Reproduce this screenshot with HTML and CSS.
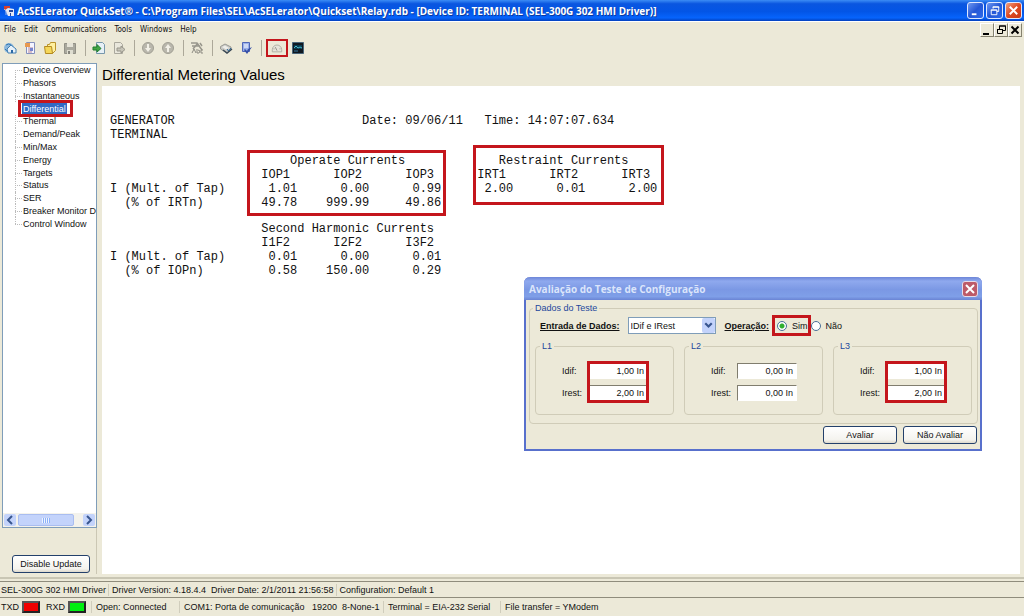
FILE: index.html
```html
<!DOCTYPE html>
<html lang="en">
<head>
<meta charset="utf-8">
<title>AcSELerator QuickSet</title>
<link rel="stylesheet" href="styles.css">
</head>
<body>
<div class="window">
  <header class="titlebar">
    <svg class="app-icon" viewBox="0 0 12 12" aria-hidden="true"><path d="M1 1h6v2H4v2H1z" fill="#d8412f"/><path d="M2 5l3-2 6 1v7H5z" fill="#e4e8f4"/><path d="M6 5h4v2H6zM7 8h1v3H7z" fill="#27489c"/><path d="M1 4l2 2v4" stroke="#9db4e8" fill="none"/></svg>
    <h1 class="title">AcSELerator QuickSet® - C:\Program Files\SEL\AcSELerator\Quickset\Relay.rdb - [Device ID: TERMINAL (SEL-300G 302 HMI Driver)]</h1>
    <div class="window-buttons">
      <button class="wbtn" aria-label="Minimize"><svg viewBox="0 0 16 16"><path d="M4 11h5v2H4z" fill="#fff"/></svg></button>
      <button class="wbtn" aria-label="Restore"><svg viewBox="0 0 16 16"><path d="M6.500 6V4h6v5h-2M6 4.500h7M4.500 7.500h6v5h-6zM4 7.500h7" fill="none" stroke="#fff"/></svg></button>
      <button class="wbtn wbtn-close" aria-label="Close"><svg viewBox="0 0 16 16"><path d="M4 4l8 8M12 4l-8 8" fill="none" stroke="#fff" stroke-width="2"/></svg></button>
    </div>
  </header>

  <nav class="menubar">
    <button>File</button><button>Edit</button><button>Communications</button><button>Tools</button><button>Windows</button><button>Help</button>
    <div class="mdi-buttons">
      <button aria-label="Minimize document"><svg viewBox="0 0 12 12"><path d="M2 9h6v2H2z"/></svg></button>
      <button aria-label="Restore document"><svg viewBox="0 0 12 12"><path d="M4.500 5V2h6v4.500H8M4 2h7M2.500 5.500h5v4h-5zM2 5.500h6" fill="none" stroke="#000"/></svg></button>
      <button aria-label="Close document"><svg viewBox="0 0 12 12"><path d="M2.500 2.500l7 7M9.500 2.500l-7 7" fill="none" stroke="#000" stroke-width="2"/></svg></button>
    </div>
  </nav>

  <div class="toolbar">
    <button aria-label="Home"><svg viewBox="0 0 14 14"><circle cx="6" cy="7" r="5" fill="#8db8dc"/><path d="M3 4q3-2 5 0M2 8q2 2 3 3" stroke="#3478b4" fill="none"/><path d="M4 8l4-4 5 4v4H5z" fill="#e8f1f8" stroke="#417fb3"/><path d="M8 9h2v3H8z" fill="#2968a5"/></svg></button>
    <button aria-label="New"><svg viewBox="0 0 14 14"><path d="M3.500 1.500h8v11h-8z" fill="#f4f4ff" stroke="#8490bd"/><path d="M2 2h5v4H2z" fill="#e89950"/><path d="M5 7h5M5 9h5M5 11h4" stroke="#b88794"/><path d="M7 7h3v3H7z" fill="#7684cf"/></svg></button>
    <button aria-label="Open"><svg viewBox="0 0 14 14"><path d="M4.500 3.500h2l1-2h5v8l-3 3h-5z" fill="#fff0a0" stroke="#bb942b"/><path d="M1.500 5.500h7l1 7h-7z" fill="#f5d75a" stroke="#b58a20"/></svg></button>
    <button aria-label="Save" disabled><svg viewBox="0 0 14 14"><path d="M1.500 2.500h11v10h-11z" fill="#aaa99e" stroke="#929187"/><path d="M4 2h6v4H4z" fill="#e6e4d8"/><path d="M4 9h6v4H4z" fill="#deddd0"/><path d="M5 10h2v3H5z" fill="#85847b"/></svg></button>
    <span class="sep"></span>
    <button aria-label="Read"><svg viewBox="0 0 14 14"><path d="M4.500 1.500h6l2 2v9h-8z" fill="#e7f0f6" stroke="#7797ac"/><path d="M1 6h4V3.500L9 7.500 5 11V9H1z" fill="#43a644" stroke="#207d2d"/></svg></button>
    <button aria-label="Send" disabled><svg viewBox="0 0 14 14"><path d="M2.500 1.500h6l2 2v9h-8z" fill="#e9e7dc" stroke="#aaa89d"/><path d="M5 7h4V5l4 3.500L9 12v-2H5z" fill="#c6c4b8" stroke="#98968b"/></svg></button>
    <span class="sep"></span>
    <button aria-label="Download" disabled><svg viewBox="0 0 14 14"><circle cx="7" cy="7" r="5.500" fill="#b9b7ac" stroke="#a19f94"/><path d="M6 3h2v4h2l-3 4-3-4h2z" fill="#f2f0e7"/></svg></button>
    <button aria-label="Upload" disabled><svg viewBox="0 0 14 14"><circle cx="7" cy="7" r="5.500" fill="#b9b7ac" stroke="#a19f94"/><path d="M6 11h2V7h2L7 3 4 7h2z" fill="#f2f0e7"/></svg></button>
    <span class="sep"></span>
    <button aria-label="Rename" disabled><svg viewBox="0 0 14 14"><path d="M1 2h6l5 7M8 2L3 8M10 2l2 3M2 5h8" stroke="#98968c" stroke-width="1.500" fill="none"/><path d="M2 12l2-4 2 4M7 8v4h2l1-2-2-1M13 9h-2v3h2" stroke="#8d8b82" fill="none"/></svg></button>
    <span class="sep"></span>
    <button aria-label="Terminal"><svg viewBox="0 0 14 14"><path d="M1.500 5.500L6 3l6 3v3l-4 3-6.500-4z" fill="#c9c9c4" stroke="#9a9a94"/><path d="M3 6l3-1.500L10 7 7 8.500z" fill="#eeeeea"/><path d="M4 9l4 3 5-4" stroke="#3c4a56" stroke-width="1.500" fill="none"/><path d="M8 8l1.500 2L12 7" stroke="#2a6696" fill="none"/></svg></button>
    <button aria-label="Check"><svg viewBox="0 0 14 14"><path d="M3.500 1.500h7v9h-7z" fill="#9bb1ea" stroke="#5167b7"/><path d="M5 4h4M5 6h4" stroke="#fff"/><path d="M5 9l3 4 5-7-4 2-1 2-2-2z" fill="#354fa8"/></svg></button>
    <span class="sep"></span>
    <button class="gauge" aria-label="Metering"><svg viewBox="0 0 14 14"><path d="M1.500 11.500V9a5.500 5.500 0 0 1 11 0v2.500z" fill="#e6e4da" stroke="#aaa89e"/><path d="M7 10L5 6M3 8h1M10 8h1" stroke="#88867d" fill="none"/></svg></button>
    <button aria-label="HMI"><svg viewBox="0 0 14 14"><path d="M1.500 1.500h11v11h-11z" fill="#101820" stroke="#48657a"/><path d="M3 4h8v4H3z" fill="#083b50"/><path d="M3 7l2-2 2 2 2-1 2 1" stroke="#48b6c8" fill="none"/><path d="M3 10h4" stroke="#3678a1"/></svg></button>
  </div>

  <main class="workspace">
    <aside class="sidebar">
      <div class="tree-panel">
        <ul class="tree">
          <li><a href="#">Device Overview</a></li>
          <li><a href="#">Phasors</a></li>
          <li><a href="#">Instantaneous</a></li>
          <li class="selected"><a href="#">Differential</a></li>
          <li><a href="#">Thermal</a></li>
          <li><a href="#">Demand/Peak</a></li>
          <li><a href="#">Min/Max</a></li>
          <li><a href="#">Energy</a></li>
          <li><a href="#">Targets</a></li>
          <li><a href="#">Status</a></li>
          <li><a href="#">SER</a></li>
          <li><a href="#">Breaker Monitor Da</a></li>
          <li><a href="#">Control Window</a></li>
        </ul>
        <div class="scrollbar">
          <button aria-label="Scroll left"><svg viewBox="0 0 12 12"><path d="M8 2L4 6l4 4" fill="none" stroke="#38568f" stroke-width="2"/></svg></button>
          <span class="track"><span class="thumb"></span></span>
          <button aria-label="Scroll right"><svg viewBox="0 0 12 12"><path d="M4 2l4 4-4 4" fill="none" stroke="#38568f" stroke-width="2"/></svg></button>
        </div>
      </div>
      <div class="update-panel"><button class="xp-button">Disable Update</button></div>
    </aside>

    <section class="content">
      <h2>Differential Metering Values</h2>
      <div class="report">
<pre>GENERATOR                          Date: 09/06/11   Time: 14:07:07.634
TERMINAL</pre>
<pre>                         Operate Currents             Restraint Currents
                     IOP1      IOP2      IOP3      IRT1      IRT2      IRT3
I (Mult. of Tap)      1.01      0.00      0.99      2.00      0.01      2.00
  (% of IRTn)        49.78    999.99     49.86</pre>
<pre>                     Second Harmonic Currents
                     I1F2      I2F2      I3F2
I (Mult. of Tap)      0.01      0.00      0.01
  (% of IOPn)         0.58    150.00      0.29</pre>
        <span class="mark mark-operate"></span>
        <span class="mark mark-restraint"></span>
      </div>
    </section>
  </main>

  <footer class="status">
    <div class="status-row driver-row">
      <span>SEL-300G 302 HMI Driver</span>
      <span>Driver Version: 4.18.4.4&nbsp; Driver Date: 2/1/2011 21:56:58</span>
      <span>Configuration: Default 1</span>
    </div>
    <div class="status-row comm-row">
      <span class="leds">TXD <i class="led led-tx"></i> <b class="rx">RXD</b> <i class="led led-rx"></i></span>
      <span class="open">Open: Connected</span>
      <span class="port">COM1: Porta de comunicação&nbsp;&nbsp; 19200&nbsp; 8-None-1</span>
      <span class="term">Terminal = EIA-232 Serial</span>
      <span>File transfer = YModem</span>
    </div>
  </footer>

  <form class="dialog" role="dialog" aria-labelledby="dialog-title">
    <div class="dialog-title">
      <h2 id="dialog-title">Avaliação do Teste de Configuração</h2>
      <button type="button" class="dialog-close" aria-label="Close"><svg viewBox="0 0 14 14"><path d="M3 3l8 8M11 3l-8 8" fill="none" stroke="#fff" stroke-width="2"/></svg></button>
    </div>
    <div class="dialog-body">
      <fieldset class="outer">
        <legend>Dados do Teste</legend>
        <div class="options">
          <label class="strong" for="entrada">Entrada de Dados:</label>
          <span class="select"><select id="entrada"><option>IDif e IRest</option></select><span class="arrow"><svg viewBox="0 0 12 12"><path d="M3 4l3 3 3-3" fill="none" stroke="#38568f" stroke-width="2"/></svg></span></span>
          <span class="strong operation">Operação:</span>
          <label class="radio yes"><input type="radio" name="op" checked>Sim</label>
          <label class="radio"><input type="radio" name="op">Não</label>
        </div>
        <div class="phases">
          <fieldset><legend>L1</legend>
            <div class="fields marked">
              <label for="d1">Idif:</label><input id="d1" value="1,00 In">
              <label for="r1">Irest:</label><input id="r1" value="2,00 In">
            </div></fieldset>
          <fieldset><legend>L2</legend>
            <div class="fields">
              <label for="d2">Idif:</label><input id="d2" value="0,00 In">
              <label for="r2">Irest:</label><input id="r2" value="0,00 In">
            </div></fieldset>
          <fieldset><legend>L3</legend>
            <div class="fields marked">
              <label for="d3">Idif:</label><input id="d3" value="1,00 In">
              <label for="r3">Irest:</label><input id="r3" value="2,00 In">
            </div></fieldset>
        </div>
      </fieldset>
      <div class="actions"><button type="button" class="xp-button">Avaliar</button><button type="button" class="xp-button">Não Avaliar</button></div>
    </div>
  </form>
</div>
</body>
</html>
```

FILE: styles.css
```css
:root {
  --face: #ece9d8;
  --ui: "DejaVu Sans Condensed", "Liberation Sans", Arial, sans-serif;
  --sans: "Liberation Sans", Arial, sans-serif;
  --red: #c4161c;
}

*, *::before, *::after { box-sizing: border-box; }

body {
  margin: 0;
  background: var(--face);
  color: #111;
  font: 9px/12px var(--sans);
}

button, input, select { font: inherit; color: inherit; margin: 0; padding: 0; }
button { border: 0; background: none; }
svg { display: block; width: 100%; height: 100%; }
h1, h2, pre, ul { margin: 0; padding: 0; }

.window {
  position: relative;
  display: flex;
  flex-direction: column;
  min-height: 100vh;
}

.titlebar {
  display: flex;
  align-items: center;
  height: 21px;
  padding: 0 2px 0 3px;
  gap: 2px;
  background: linear-gradient(#3c8df5, #0a56e0 18%, #0355e6 55%, #0664fc 85%, #0340bd);
}
.app-icon { width: 12px; height: 12px; flex: none; }
.title {
  flex: 1;
  overflow: hidden;
  white-space: nowrap;
  color: #fff;
  font: bold 10px/16px "Open Sans", var(--sans);
  text-shadow: 1px 1px 0 #0b3a9e;
}
.window-buttons { display: flex; gap: 2px; }
.wbtn {
  width: 17px;
  height: 17px;
  border: 1px solid #dfe8ff;
  border-radius: 3px;
  background: linear-gradient(135deg, #6f98f0, #2457d6 50%, #2e6ae8);
}
.wbtn-close { background: linear-gradient(135deg, #f0a080, #dd4a22 50%, #c83a18); }

.menubar {
  display: flex;
  align-items: center;
  height: 17px;
  padding-left: 4px;
  gap: 8px;
  border-top: 1px solid #fff;
  font: 8px/12px var(--ui);
}
.mdi-buttons { display: flex; margin-left: auto; padding-right: 2px; }
.mdi-buttons button {
  width: 14px;
  height: 14px;
  border: 1px solid;
  border-color: #fff #85826f #85826f #fff;
}

.toolbar {
  display: flex;
  align-items: center;
  height: 20px;
  margin-bottom: 2px;
  padding-left: 3px;
  gap: 6px;
}
.toolbar button { width: 14px; height: 14px; flex: none; }
.sep { width: 1px; height: 16px; margin-left: 2px; background: #aca899; }
.toolbar .gauge { width: 22px; height: 18px; margin: 0 -3px 0 -2px; padding: 1px 3px; border: 2px solid var(--red); }

.workspace { flex: 1; display: flex; gap: 5px; padding: 3px 4px 3px 2px; }

.sidebar { display: flex; flex-direction: column; width: 95px; flex: none; }
.tree-panel {
  flex: 1;
  display: flex;
  flex-direction: column;
  justify-content: space-between;
  overflow: hidden;
  border: 1px solid #7f9db9;
  background: #fff;
}
.tree {
  display: grid;
  grid-auto-rows: 1fr;
  height: 166px;
  list-style: none;
  padding-left: 12px;
}
.tree li {
  position: relative;
  display: flex;
  align-items: center;
  padding-left: 8px;
  white-space: nowrap;
}
.tree li::before {
  content: "";
  position: absolute;
  left: 0;
  top: 0;
  bottom: 0;
  border-left: 1px dotted #bbb;
}
.tree li:first-child::before { top: 50%; }
.tree li:last-child::before { bottom: 50%; }
.tree li::after {
  content: "";
  position: absolute;
  left: 0;
  top: 50%;
  width: 7px;
  border-top: 1px dotted #bbb;
}
.tree a { color: inherit; text-decoration: none; }
.tree .selected a { background: #316ac5; color: #fff; outline: 1px solid #316ac5; }
.tree .selected { outline: 3px solid var(--red); outline-offset: -1px; width: 51px; margin-left: 5px; padding-left: 3px; }
.tree .selected::before, .tree .selected::after { display: none; }

.scrollbar { display: flex; height: 14px; padding: 1px; background: #f3f2ec; }
.scrollbar button { width: 12px; border-radius: 2px; background: #c3d3fb; }
.track { flex: 1; padding: 0 9px 0 2px; }
.thumb { display: block; height: 12px; border: 1px solid #a9bdf0; border-radius: 2px; background: repeating-linear-gradient(90deg, #eef4fe 0 1px, #8cb0f8 1px 2px) center / 8px 5px no-repeat #c3d3fb; }

.update-panel { padding: 27px 6px 1px 10px; border-right: 1px solid #cbc7b4; }
.update-panel .xp-button { width: 100%; }
.xp-button {
  height: 18px;
  border: 1px solid #23406b;
  border-radius: 3px;
  background: linear-gradient(#fff, #f4f3ee 80%, #dcd8cc);
}

.content { flex: 1; display: flex; flex-direction: column; min-width: 0; }
.content h2 { height: 23px; font: 15px/24px var(--sans); color: #000; }
.report {
  position: relative;
  flex: 1;
  display: flex;
  flex-direction: column;
  gap: 12px;
  padding: 28px 8px;
  overflow: hidden;
  background: #fff;
}
.report pre { font: 12px/14px "Liberation Mono", monospace; }
.mark { position: absolute; border: 3px solid var(--red); }
.mark-operate { left: 145px; top: 64px; width: 199px; height: 66px; }
.mark-restraint { left: 371px; top: 59px; width: 191px; height: 60px; }

.status { font: 9px/12px var(--sans); border-top: 2px solid #c9c6b4; padding-top: 2px; }
.status-row { display: flex; align-items: center; border-top: 1px solid #8f8c7c; white-space: nowrap; }
.status-row > span { flex: none; }
.status-row > span + span { border-left: 1px solid #d0cdbc; padding-left: 4px; }
.driver-row { height: 16px; padding-left: 1px; }
.driver-row > span { padding-right: 2px; }
.driver-row > span + span { padding-left: 3px; }
.comm-row { height: 19px; padding-left: 1px; }
.leds { display: flex; align-items: center; gap: 3px; width: 90px; }
.rx { font-weight: normal; margin-left: 3px; }
.led { width: 18px; height: 12px; border: 2px solid #444; border-color: #555 #222 #222 #555; }
.led-tx { background: #f00000; }
.led-rx { background: #00f010; }
.open { width: 88px; }
.port { width: 204px; }
.term { width: 117px; }

.dialog {
  position: absolute;
  left: 524px;
  top: 277px;
  width: 458px;
  border: 2px solid #5870cc;
  border-top: 0;
  border-radius: 6px 6px 0 0;
  background: var(--face);
}
.dialog-title {
  display: flex;
  align-items: center;
  justify-content: space-between;
  height: 23px;
  margin: 0 -2px;
  padding: 0 4px 0 5px;
  border-radius: 6px 6px 0 0;
  background: linear-gradient(#6d86d8, #8fa9ee 18%, #7b98e4 55%, #7f9fe8 85%, #6a84d4);
}
.dialog-title h2 { font: bold 10px/14px "Open Sans", var(--sans); color: #dbe5fb; }
.dialog-close { width: 16px; height: 16px; border: 1px solid #e6dbe8; border-radius: 3px; background: #bd5a68; }
.dialog-body { padding: 2px 2px 5px 3px; }

fieldset { margin: 0; padding: 0; min-width: 0; border: 1px solid #d0ccb8; border-radius: 4px; }
legend { padding: 0 2px; color: #24489c; }
.outer { padding: 3px 5px 8px; }
.outer > legend { margin-left: -2px; }
.options { display: flex; align-items: center; height: 17px; padding-left: 5px; }
.strong { font-weight: bold; text-decoration: underline; }
.select { position: relative; width: 88px; height: 17px; margin-left: 8px; }
.select select { appearance: none; display: block; width: 100%; height: 100%; padding-left: 2px; border: 1px solid #7f9db9; border-radius: 0; background: #fff; }
.arrow { position: absolute; right: 1px; top: 1px; width: 13px; height: 15px; border-radius: 2px; background: #c3d3fb; pointer-events: none; }
.operation { margin-left: 9px; }
.radio { display: flex; align-items: center; gap: 5px; }
.radio input { appearance: none; width: 10px; height: 10px; border: 1px solid #4a7098; border-radius: 50%; background: #fff; }
.radio input:checked { background: radial-gradient(#2fae2f 0 2px, #fff 3px); }
.yes { height: 21px; margin-left: 3px; padding: 0 0 0 2px; border: 3px solid var(--red); }

.phases { display: grid; grid-template-columns: repeat(3, 1fr); gap: 10px; padding-top: 6px; }
.phases fieldset { padding: 11px 25px 13px 26px; }
.phases legend { margin-left: -22px; }
.fields { position: relative; display: grid; grid-template-columns: 1fr 60px; gap: 6px 0; align-items: center; }
.fields input { width: 100%; height: 16px; padding-right: 3px; text-align: right; border: 1px solid; border-color: #807d6e #fff #fff #807d6e; border-radius: 0; background: #fff; }
.marked::after { content: ""; position: absolute; top: -2px; right: -1px; bottom: -2px; width: 62px; border: 3px solid var(--red); pointer-events: none; }

.actions { display: flex; justify-content: flex-end; gap: 6px; padding: 2px 1px 0 0; }
.actions .xp-button { width: 74px; }
```
